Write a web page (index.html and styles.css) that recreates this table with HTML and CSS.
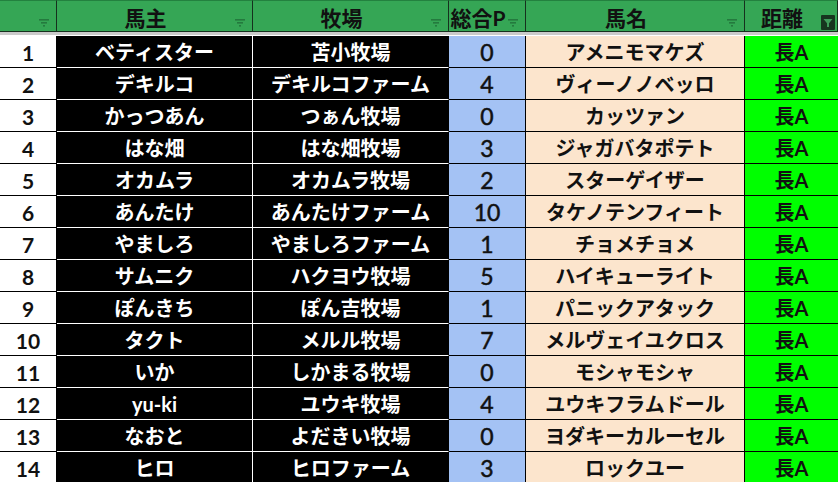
FILE: index.html
```html
<!DOCTYPE html>
<html lang="ja">
<head>
<meta charset="utf-8">
<link rel="stylesheet" href="styles.css">
</head>
<body>
<div class="sheet">
  <div class="hd"><span class="hd-label"></span><svg class="flt" viewBox="0 0 10 8"><rect x="0" y="0" width="10" height="1.6"/><rect x="2" y="3" width="6" height="1.6"/><rect x="4" y="6" width="2" height="1.6"/></svg></div>
  <div class="hd"><span class="hd-label">馬主</span><svg class="flt" viewBox="0 0 10 8"><rect x="0" y="0" width="10" height="1.6"/><rect x="2" y="3" width="6" height="1.6"/><rect x="4" y="6" width="2" height="1.6"/></svg></div>
  <div class="hd"><span class="hd-label">牧場</span><svg class="flt" viewBox="0 0 10 8"><rect x="0" y="0" width="10" height="1.6"/><rect x="2" y="3" width="6" height="1.6"/><rect x="4" y="6" width="2" height="1.6"/></svg></div>
  <div class="hd hd-p"><span class="hd-label">総合<span class="lat">P</span></span><svg class="flt" viewBox="0 0 10 8"><rect x="0" y="0" width="10" height="1.6"/><rect x="2" y="3" width="6" height="1.6"/><rect x="4" y="6" width="2" height="1.6"/></svg></div>
  <div class="hd"><span class="hd-label">馬名</span><svg class="flt" viewBox="0 0 10 8"><rect x="0" y="0" width="10" height="1.6"/><rect x="2" y="3" width="6" height="1.6"/><rect x="4" y="6" width="2" height="1.6"/></svg></div>
  <div class="hd"><span class="hd-label">距離</span><span class="flt-on"><svg viewBox="0 0 14 15"><path d="M2.5 4 H11.5 L8 8.2 V12 H6 V8.2 Z"/></svg></span></div>
  <div class="band"></div>

  <div class="c num">1</div><div class="c blk">ベティスター</div><div class="c blk c2">苫小牧場</div><div class="c pt">0</div><div class="c hn">アメニモマケズ</div><div class="c ds">長<span class="lat">A</span></div>
  <div class="c num">2</div><div class="c blk">デキルコ</div><div class="c blk c2">デキルコファーム</div><div class="c pt">4</div><div class="c hn">ヴィーノノベッロ</div><div class="c ds">長<span class="lat">A</span></div>
  <div class="c num">3</div><div class="c blk">かっつあん</div><div class="c blk c2">つぁん牧場</div><div class="c pt">0</div><div class="c hn">カッツァン</div><div class="c ds">長<span class="lat">A</span></div>
  <div class="c num">4</div><div class="c blk">はな畑</div><div class="c blk c2">はな畑牧場</div><div class="c pt">3</div><div class="c hn">ジャガバタポテト</div><div class="c ds">長<span class="lat">A</span></div>
  <div class="c num">5</div><div class="c blk">オカムラ</div><div class="c blk c2">オカムラ牧場</div><div class="c pt">2</div><div class="c hn">スターゲイザー</div><div class="c ds">長<span class="lat">A</span></div>
  <div class="c num">6</div><div class="c blk">あんたけ</div><div class="c blk c2">あんたけファーム</div><div class="c pt">10</div><div class="c hn">タケノテンフィート</div><div class="c ds">長<span class="lat">A</span></div>
  <div class="c num">7</div><div class="c blk">やましろ</div><div class="c blk c2">やましろファーム</div><div class="c pt">1</div><div class="c hn">チョメチョメ</div><div class="c ds">長<span class="lat">A</span></div>
  <div class="c num">8</div><div class="c blk">サムニク</div><div class="c blk c2">ハクヨウ牧場</div><div class="c pt">5</div><div class="c hn">ハイキューライト</div><div class="c ds">長<span class="lat">A</span></div>
  <div class="c num">9</div><div class="c blk">ぽんきち</div><div class="c blk c2">ぽん吉牧場</div><div class="c pt">1</div><div class="c hn">パニックアタック</div><div class="c ds">長<span class="lat">A</span></div>
  <div class="c num">10</div><div class="c blk">タクト</div><div class="c blk c2">メルル牧場</div><div class="c pt">7</div><div class="c hn">メルヴェイユクロス</div><div class="c ds">長<span class="lat">A</span></div>
  <div class="c num">11</div><div class="c blk">いか</div><div class="c blk c2">しかまる牧場</div><div class="c pt">0</div><div class="c hn">モシャモシャ</div><div class="c ds">長<span class="lat">A</span></div>
  <div class="c num">12</div><div class="c blk"><span class="lat">yu-ki</span></div><div class="c blk c2">ユウキ牧場</div><div class="c pt">4</div><div class="c hn">ユウキフラムドール</div><div class="c ds">長<span class="lat">A</span></div>
  <div class="c num">13</div><div class="c blk">なおと</div><div class="c blk c2">よだきい牧場</div><div class="c pt">0</div><div class="c hn">ヨダキーカルーセル</div><div class="c ds">長<span class="lat">A</span></div>
  <div class="c num">14</div><div class="c blk">ヒロ</div><div class="c blk c2">ヒロファーム</div><div class="c pt">3</div><div class="c hn">ロックユー</div><div class="c ds">長<span class="lat">A</span></div>
</div>
</body>
</html>
```

FILE: styles.css
```css
html, body {
  margin: 0;
  padding: 0;
  background: #ffffff;
  overflow: hidden;
}
body {
  width: 838px;
  height: 482px;
  font-family: "Noto Sans CJK JP", "Noto Sans", sans-serif;
}
.sheet {
  display: grid;
  grid-template-columns: 57px 196px 196px 77px 219px 93px;
  grid-template-rows: 32px 4px repeat(14, 32px);
}
.lat {
  font-family: Lato, "Noto Sans CJK JP", sans-serif;
}
.hd {
  box-sizing: border-box;
  background: #35a655;
  border-top: 1px solid #23813f;
  border-right: 1px solid #16301e;
  border-bottom: 1px solid #16301e;
  position: relative;
  display: flex;
  align-items: center;
  justify-content: center;
  padding-right: 18px;
  font-size: 21px;
  font-weight: 700;
  color: #111111;
  line-height: 1;
}
.hd:last-of-type {
  border-right: none;
}
.hd-label {
  position: relative;
  top: 1px;
}
.flt {
  position: absolute;
  right: 7px;
  top: 18px;
  width: 10px;
  height: 8px;
  fill: #22733a;
  opacity: 0.85;
}
.flt-on {
  position: absolute;
  right: 2px;
  top: 14px;
  width: 14px;
  height: 15px;
  background: #17351f;
  border-radius: 1px;
}
.flt-on svg {
  display: block;
  width: 14px;
  height: 15px;
  fill: #3f9a5a;
}
.band {
  grid-column: 1 / -1;
  background: #cacaca;
  border-bottom: 1px solid #ffffff;
  box-sizing: border-box;
}
.c {
  box-sizing: border-box;
  border-right: 1px solid #000000;
  border-bottom: 1px solid #000000;
  display: flex;
  align-items: center;
  justify-content: center;
  font-size: 20px;
  font-weight: 700;
  line-height: 1;
  white-space: nowrap;
  padding-top: 1px;
}
.num {
  background: #ffffff;
  color: #111111;
  font-family: Lato, sans-serif;
  font-size: 21px;
}
.blk {
  background: #000000;
  color: #ffffff;
  border-right-color: #ffffff;
  border-bottom-color: #ffffff;
}
.c2 {
  border-right-color: #000000;
}
.pt {
  background: #a4c2f4;
  color: #111111;
  font-family: Lato, sans-serif;
  font-weight: 400;
  font-size: 23px;
  -webkit-text-stroke: 0.5px #111111;
}
.hn {
  background: #fce5cd;
  color: #111111;
  font-weight: 700;
}
.ds {
  background: #00ff00;
  color: #111111;
  border-right: none;
}
```
